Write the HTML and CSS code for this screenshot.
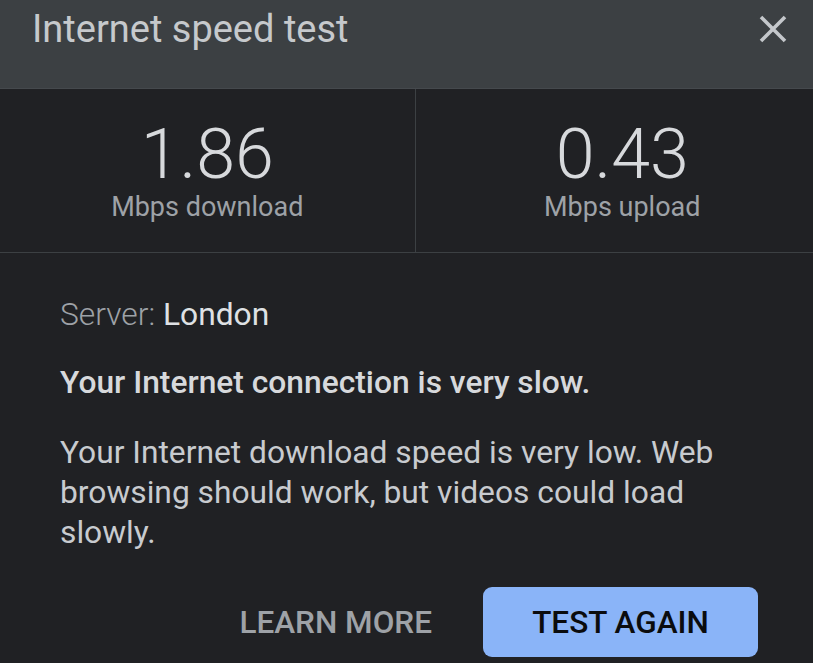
FILE: index.html
```html
<!DOCTYPE html>
<html lang="en">
<head>
<meta charset="utf-8">
<title>Internet speed test</title>
<link rel="stylesheet" href="styles.css">
</head>
<body>
<div class="dialog">
  <header class="header">
    <h1 class="title">Internet speed test</h1>
    <button class="close" aria-label="Close">
      <svg width="28" height="28" viewBox="0 0 28 28"><path d="M2 2L26 26M26 2L2 26" stroke="currentColor" stroke-width="3.6" fill="none"/></svg>
    </button>
  </header>
  <section class="stats">
    <div class="stat">
      <div class="value">1.86</div>
      <div class="label">Mbps download</div>
    </div>
    <div class="stat">
      <div class="value">0.43</div>
      <div class="label">Mbps upload</div>
    </div>
  </section>
  <section class="content">
    <p class="server"><span class="server-key">Server:</span> <span class="server-val">London</span></p>
    <p class="verdict">Your Internet connection is very slow.</p>
    <p class="desc">Your Internet download speed is very low. Web browsing should work, but videos could load slowly.</p>
    <div class="actions">
      <button class="btn btn-text">LEARN MORE</button>
      <button class="btn btn-primary">TEST AGAIN</button>
    </div>
  </section>
</div>
</body>
</html>
```

FILE: styles.css
```css
* { box-sizing: border-box; }
html, body {
  margin: 0;
  padding: 0;
  background: #202124;
  overflow: hidden;
}
body {
  font-family: Roboto, "Noto Sans", Arial, sans-serif;
  width: 813px;
  height: 663px;
}
.dialog {
  width: 829px;
}
.header {
  height: 89px;
  background: #3c4043;
  border-bottom: 1px solid #45494d;
  display: flex;
  justify-content: space-between;
  align-items: flex-start;
  padding: 0 42px 0 32px;
}
.title {
  margin: 11px 0 0;
  font-size: 38px;
  line-height: 37px;
  font-weight: 400;
  color: #c6c9cc;
}
.close {
  margin-top: 15px;
  padding: 0;
  border: 0;
  background: none;
  color: #c4c7cb;
  width: 28px;
  height: 28px;
  display: block;
}
.close svg { display: block; }
.stats {
  display: grid;
  grid-template-columns: 1fr 1fr;
  border-bottom: 1px solid #3c4043;
  height: 164px;
}
.stat {
  display: flex;
  flex-direction: column;
  align-items: center;
  padding-top: 30px;
}
.stat + .stat {
  border-left: 1px solid #3c4043;
}
.value {
  font-size: 70px;
  line-height: 70px;
  font-weight: 300;
  color: #d7d9dc;
}
.label {
  margin-top: 2px;
  font-size: 27px;
  line-height: 32px;
  color: #9ea2a7;
}
.content {
  padding: 42px 71px 0 60px;
}
.content p {
  margin: 0;
  font-size: 31.75px;
  line-height: 40px;
}
.server-key {
  font-weight: 300;
  color: #9ea2a7;
}
.server-val {
  color: #dfe1e4;
}
.verdict {
  margin-top: 28px !important;
  font-weight: 500;
  color: #d7d9dc;
}
.desc {
  margin-top: 30px !important;
  color: #c8cbcf;
}
.actions {
  margin-top: 34px;
  display: flex;
  justify-content: flex-end;
  gap: 27px;
}
.btn {
  height: 70px;
  border: 0;
  border-radius: 9px;
  font-family: inherit;
  font-size: 31.5px;
  font-weight: 500;
  padding: 0 24px;
  background: none;
}
.btn-text {
  color: #9ea2a7;
}
.btn-primary {
  width: 275px;
  padding: 0;
  background: #8ab4f8;
  color: #0b0c0e;
}
```
